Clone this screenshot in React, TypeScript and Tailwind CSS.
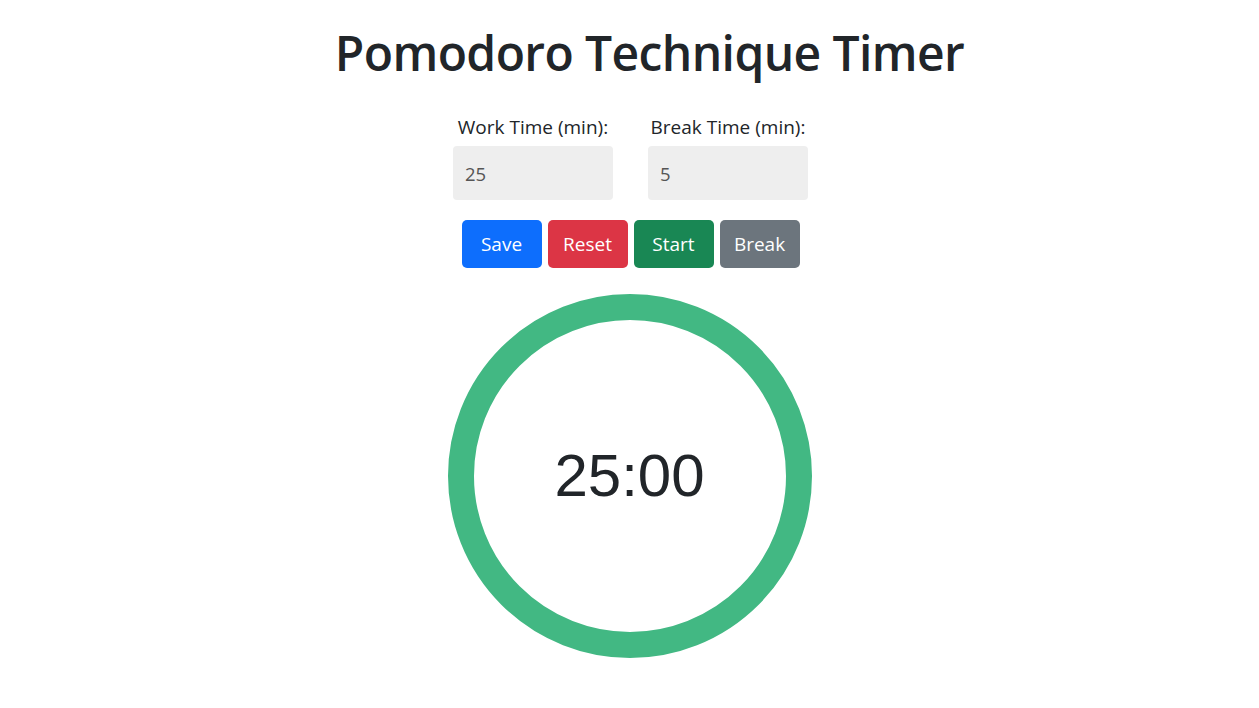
import { useState } from "react";

const SANS = "font-['Segoe_UI','Open_Sans','Noto_Sans',sans-serif]";

function Field({ label, value }: { label: string; value: string }) {
  return (
    <div className="flex w-[160px] flex-col items-center">
      <label className="text-[19px] leading-[26px] text-[#212529]">{label}</label>
      <input
        readOnly
        value={value}
        className="mt-[6px] h-[54px] w-[160px] rounded-[4px] bg-[#eeeeee] px-[12px] text-[18.5px] text-[#555] outline-none"
      />
    </div>
  );
}

export default function App() {
  const [work] = useState(25);
  const [brk] = useState(5);

  const buttons = [
    { label: "Save", cls: "bg-[#0d6efd]" },
    { label: "Reset", cls: "bg-[#dc3545]" },
    { label: "Start", cls: "bg-[#198754]" },
    { label: "Break", cls: "bg-[#6c757d]" },
  ];

  return (
    <div className={`min-h-screen bg-white ${SANS} text-[#212529]`}>
      <div className="flex flex-col items-center pt-[20px]">
        {/* Heading */}
        <h1 className="pl-[40px] text-[48px] font-semibold leading-[66px] tracking-[-0.6px]">
          Pomodoro Technique Timer
        </h1>

        {/* Time inputs */}
        <div className="mt-[28px] flex gap-[35px] pl-[2px]">
          <Field label="Work Time (min):" value={String(work)} />
          <Field label="Break Time (min):" value={String(brk)} />
        </div>

        {/* Controls */}
        <div className="mt-[20px] flex gap-[6px] pl-[2px]">
          {buttons.map((b) => (
            <button
              key={b.label}
              className={`h-[48px] w-[80px] rounded-[5px] text-[19px] text-white ${b.cls}`}
            >
              {b.label}
            </button>
          ))}
        </div>

        {/* Timer ring */}
        <div className="mt-[26px] flex h-[364px] w-[364px] items-center justify-center rounded-full border-[26px] border-[#42b883]">
          <span className="font-['Liberation_Sans',Arial,sans-serif] text-[60px] leading-none text-[#212529]">
            {String(work).padStart(2, "0")}:00
          </span>
        </div>
      </div>
    </div>
  );
}
